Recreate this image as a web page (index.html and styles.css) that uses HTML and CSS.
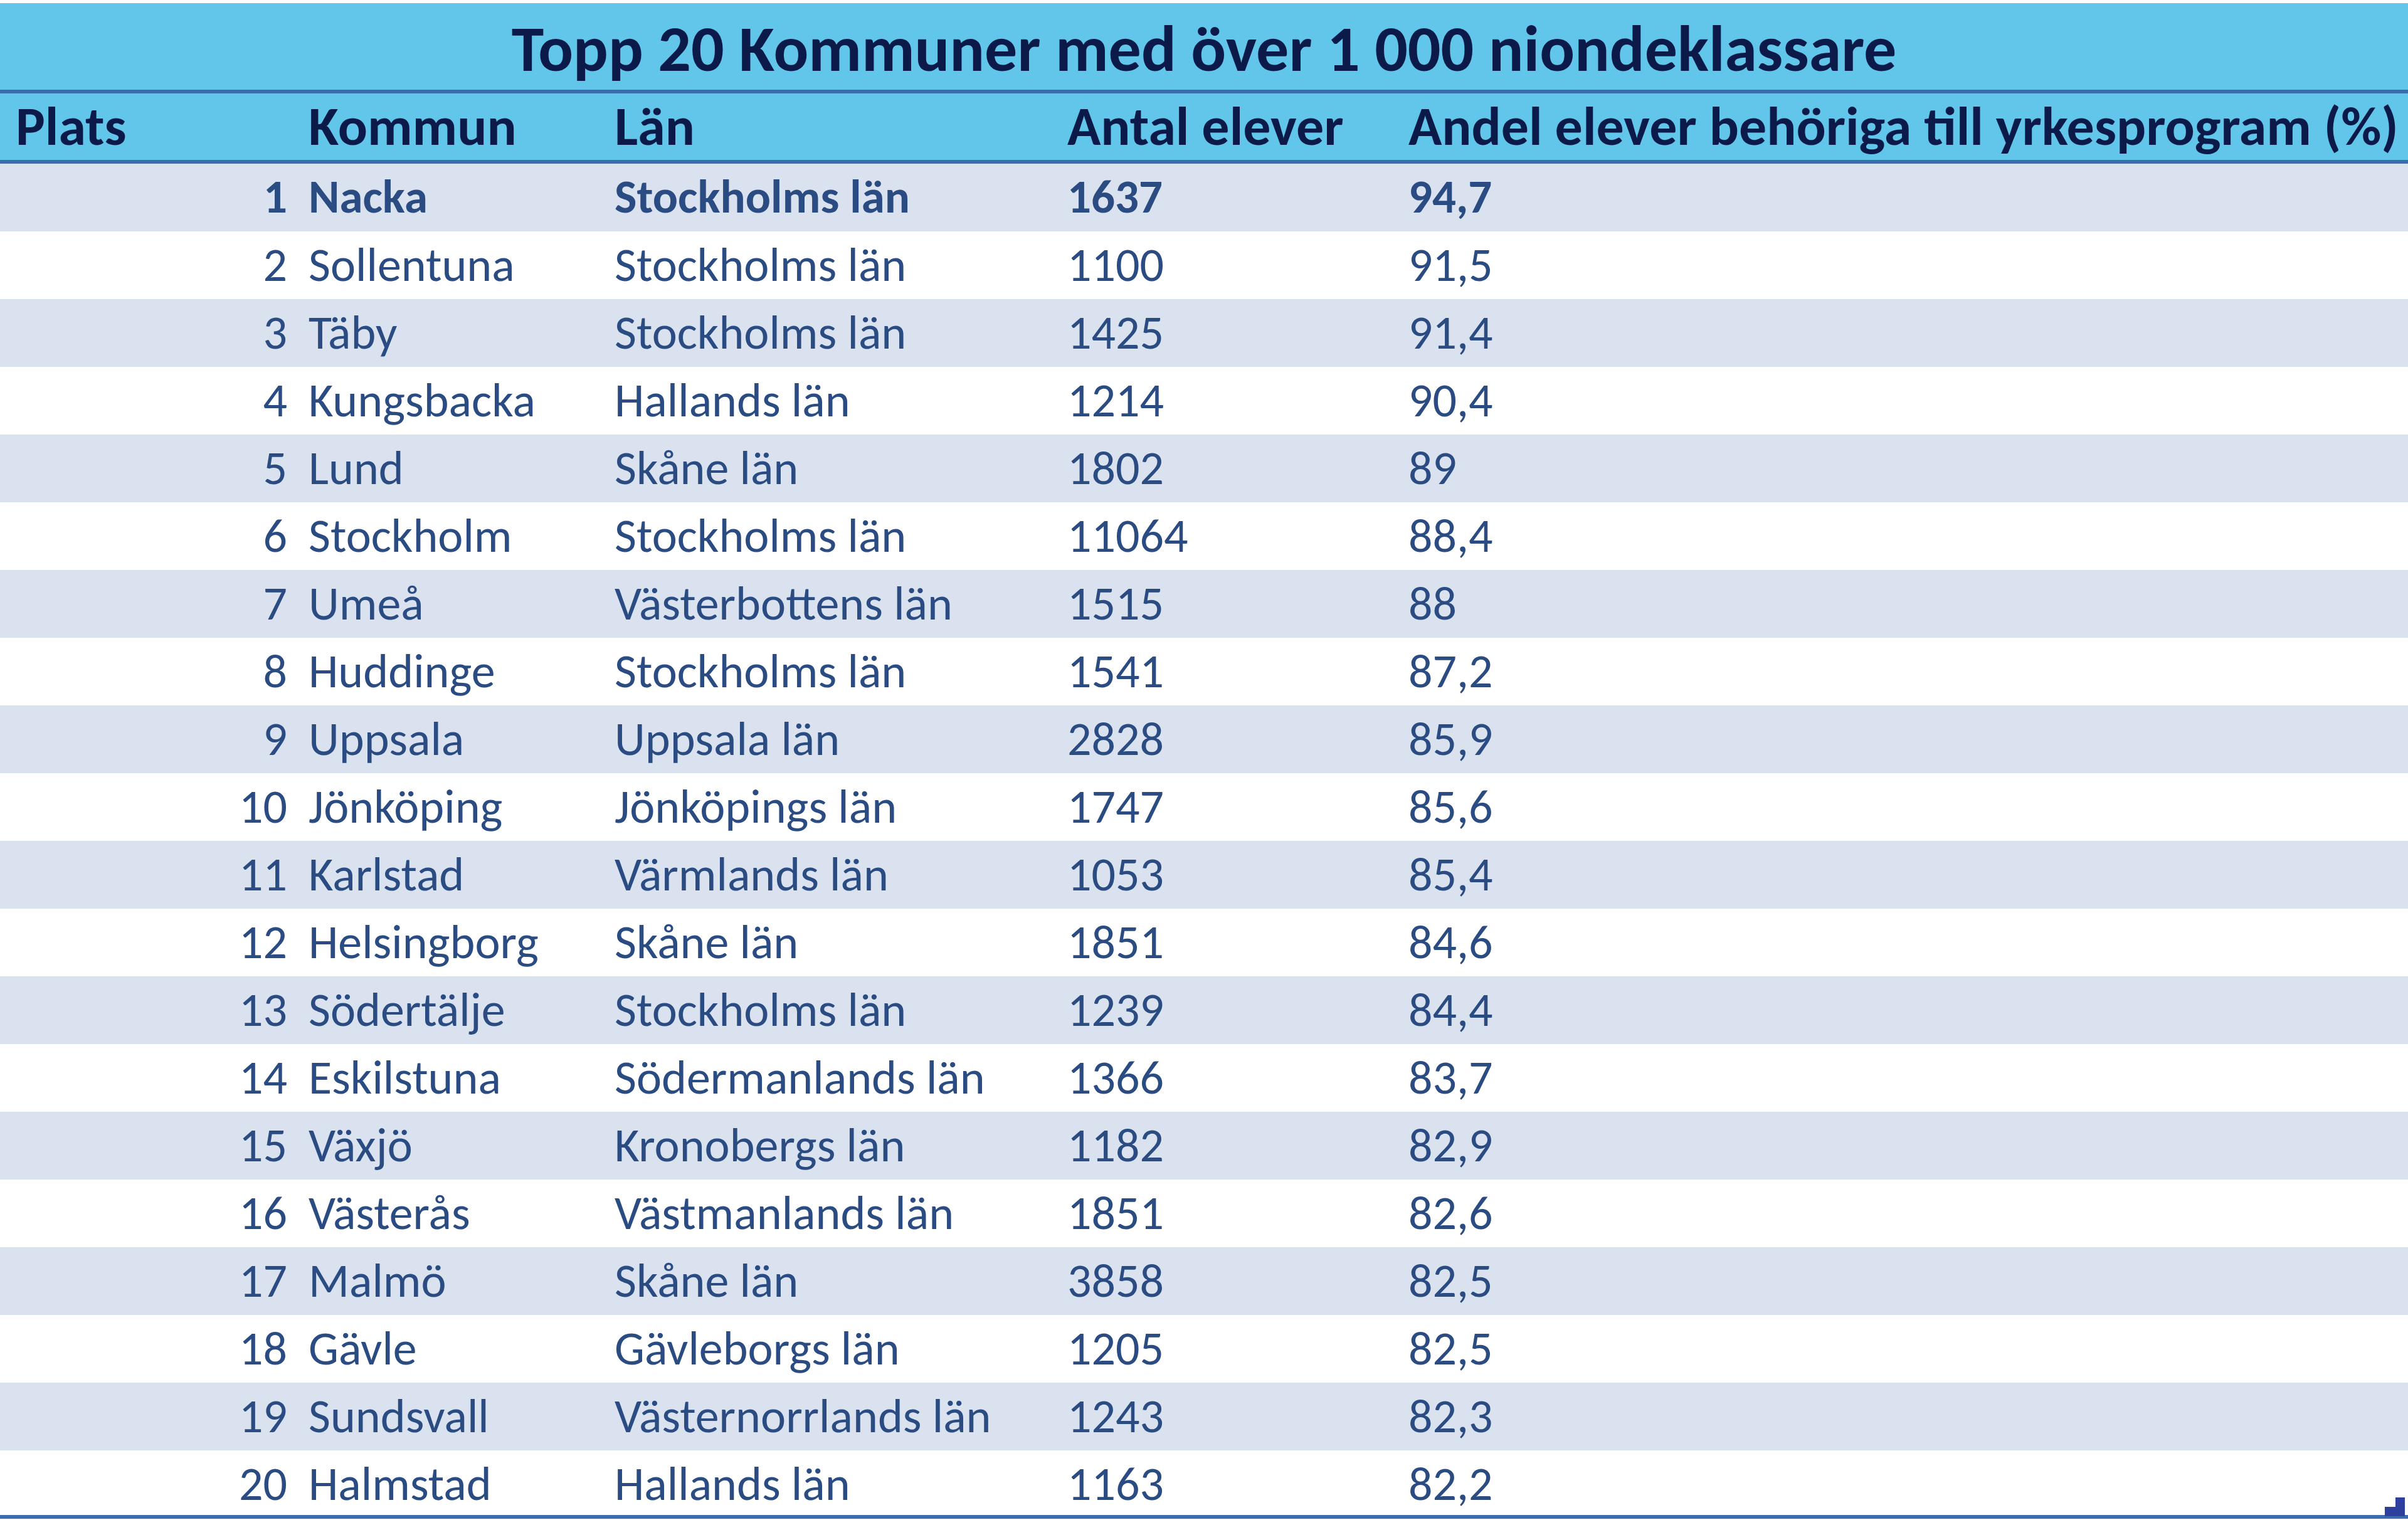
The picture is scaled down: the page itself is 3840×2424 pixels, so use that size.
FILE: index.html
```html
<!DOCTYPE html>
<html lang="sv">
<head>
<meta charset="utf-8">
<title>Topp 20 Kommuner</title>
<link rel="stylesheet" href="styles.css">
</head>
<body>
<div class="sheet">
  <div class="title">Topp 20 Kommuner med över 1 000 niondeklassare</div>
  <div class="grid head">
    <div class="c c1">Plats</div>
    <div class="c c2">Kommun</div>
    <div class="c c3">Län</div>
    <div class="c c4">Antal elever</div>
    <div class="c c5">Andel elever behöriga till yrkesprogram (%)</div>
  </div>
  <div class="grid row alt bold"><div class="c c1 num">1</div><div class="c c2">Nacka</div><div class="c c3">Stockholms län</div><div class="c c4">1637</div><div class="c c5">94,7</div></div>
  <div class="grid row"><div class="c c1 num">2</div><div class="c c2">Sollentuna</div><div class="c c3">Stockholms län</div><div class="c c4">1100</div><div class="c c5">91,5</div></div>
  <div class="grid row alt"><div class="c c1 num">3</div><div class="c c2">Täby</div><div class="c c3">Stockholms län</div><div class="c c4">1425</div><div class="c c5">91,4</div></div>
  <div class="grid row"><div class="c c1 num">4</div><div class="c c2">Kungsbacka</div><div class="c c3">Hallands län</div><div class="c c4">1214</div><div class="c c5">90,4</div></div>
  <div class="grid row alt"><div class="c c1 num">5</div><div class="c c2">Lund</div><div class="c c3">Skåne län</div><div class="c c4">1802</div><div class="c c5">89</div></div>
  <div class="grid row"><div class="c c1 num">6</div><div class="c c2">Stockholm</div><div class="c c3">Stockholms län</div><div class="c c4">11064</div><div class="c c5">88,4</div></div>
  <div class="grid row alt"><div class="c c1 num">7</div><div class="c c2">Umeå</div><div class="c c3">Västerbottens län</div><div class="c c4">1515</div><div class="c c5">88</div></div>
  <div class="grid row"><div class="c c1 num">8</div><div class="c c2">Huddinge</div><div class="c c3">Stockholms län</div><div class="c c4">1541</div><div class="c c5">87,2</div></div>
  <div class="grid row alt"><div class="c c1 num">9</div><div class="c c2">Uppsala</div><div class="c c3">Uppsala län</div><div class="c c4">2828</div><div class="c c5">85,9</div></div>
  <div class="grid row"><div class="c c1 num">10</div><div class="c c2">Jönköping</div><div class="c c3">Jönköpings län</div><div class="c c4">1747</div><div class="c c5">85,6</div></div>
  <div class="grid row alt"><div class="c c1 num">11</div><div class="c c2">Karlstad</div><div class="c c3">Värmlands län</div><div class="c c4">1053</div><div class="c c5">85,4</div></div>
  <div class="grid row"><div class="c c1 num">12</div><div class="c c2">Helsingborg</div><div class="c c3">Skåne län</div><div class="c c4">1851</div><div class="c c5">84,6</div></div>
  <div class="grid row alt"><div class="c c1 num">13</div><div class="c c2">Södertälje</div><div class="c c3">Stockholms län</div><div class="c c4">1239</div><div class="c c5">84,4</div></div>
  <div class="grid row"><div class="c c1 num">14</div><div class="c c2">Eskilstuna</div><div class="c c3">Södermanlands län</div><div class="c c4">1366</div><div class="c c5">83,7</div></div>
  <div class="grid row alt"><div class="c c1 num">15</div><div class="c c2">Växjö</div><div class="c c3">Kronobergs län</div><div class="c c4">1182</div><div class="c c5">82,9</div></div>
  <div class="grid row"><div class="c c1 num">16</div><div class="c c2">Västerås</div><div class="c c3">Västmanlands län</div><div class="c c4">1851</div><div class="c c5">82,6</div></div>
  <div class="grid row alt"><div class="c c1 num">17</div><div class="c c2">Malmö</div><div class="c c3">Skåne län</div><div class="c c4">3858</div><div class="c c5">82,5</div></div>
  <div class="grid row"><div class="c c1 num">18</div><div class="c c2">Gävle</div><div class="c c3">Gävleborgs län</div><div class="c c4">1205</div><div class="c c5">82,5</div></div>
  <div class="grid row alt"><div class="c c1 num">19</div><div class="c c2">Sundsvall</div><div class="c c3">Västernorrlands län</div><div class="c c4">1243</div><div class="c c5">82,3</div></div>
  <div class="grid row last"><div class="c c1 num">20</div><div class="c c2">Halmstad</div><div class="c c3">Hallands län</div><div class="c c4">1163</div><div class="c c5">82,2</div></div>
  <svg class="handle" viewBox="0 0 32 30" width="32" height="30"><path d="M17 0h15v30H0V15h17z" fill="#2f3f9e"/></svg>
</div>
</body>
</html>
```
FILE: styles.css
```css
html, body { margin: 0; padding: 0; background: #ffffff; }
body { font-family: Carlito, Lato, "Open Sans", sans-serif; }
.sheet { position: relative; width: 3840px; height: 2424px; padding-top: 5px; box-sizing: border-box; overflow: hidden; }
.title {
  height: 144px; box-sizing: border-box;
  padding-top: 18px;
  background: #62c6ea; color: #0b1a48;
  font-weight: 700; font-size: 104px; line-height: 110px;
  text-align: center;
  border-bottom: 6px solid #3d6cae;
}
.grid { display: grid; grid-template-columns: 480px 488px 722px 544px 1fr; }
.head {
  height: 112px; box-sizing: border-box;
  padding-top: 2px;
  background: #62c6ea; color: #0b1a48;
  font-weight: 700; font-size: 88px; line-height: 100px;
  border-bottom: 6px solid #3d6cae;
}
.row {
  height: 108px; box-sizing: border-box;
  padding-top: 3px;
  color: #2b4c82; font-size: 76px; line-height: 100px;
}
.row.alt { background: #d9e2ee; }
.row.bold { font-weight: 700; font-size: 75px; }
.row.last { height: 109px; border-bottom: 6px solid #3d6cae; }
.c { padding-left: 12px; white-space: nowrap; }
.head .c1 { padding-left: 25px; }
.c1.num { text-align: right; padding-left: 0; padding-right: 22px; }
.handle { position: absolute; right: 5px; bottom: 6px; }
```
